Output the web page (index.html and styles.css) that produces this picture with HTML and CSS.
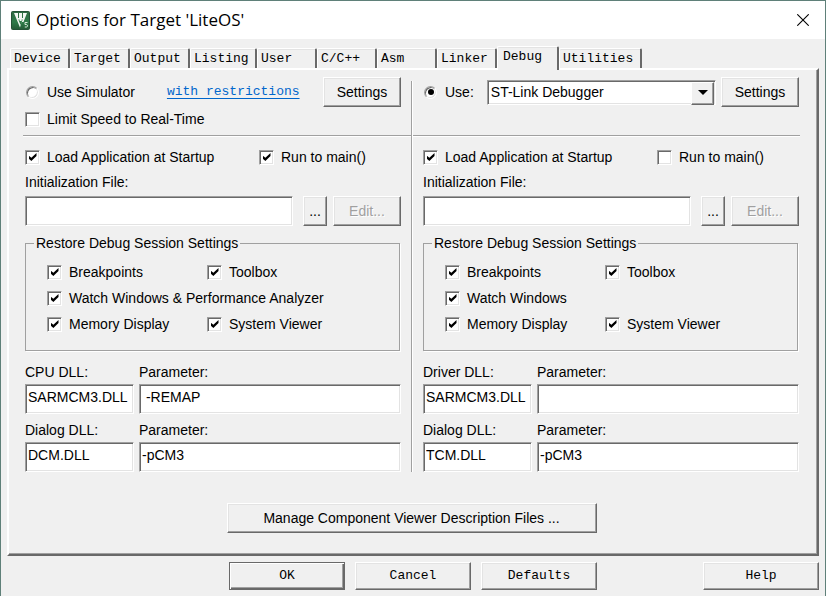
FILE: index.html
```html
<!DOCTYPE html>
<html lang="en">
<head>
<meta charset="utf-8">
<title>Options for Target 'LiteOS'</title>
<link rel="stylesheet" href="styles.css">
</head>
<body>
<main class="window">
  <header class="titlebar">
    <svg class="logo" viewBox="0 0 19 19" aria-hidden="true">
      <defs><linearGradient id="g" x1="0" y1="0" x2="0" y2="1"><stop offset="0" stop-color="#2f6b43"/><stop offset=".6" stop-color="#2e7a48"/><stop offset="1" stop-color="#235a36"/></linearGradient></defs>
      <rect x=".5" y=".5" width="18" height="18" rx="1" fill="url(#g)" stroke="#245236"/>
      <path d="M3 2h4v5h1V2h3v5h1V2h4l-3.500 9h-2L9 16.500Z" fill="#f3f8f3"/>
      <path d="M7.300 8.500h4.400L9.600 14Z" fill="#2e7a48"/>
      <path d="M8.600 8h2v2h-2Z" fill="#f3f8f3"/>
      <path d="M16.500 11.500h-2.500v2h1.500q1 .3 1 1.300t-1 1.200h-1.700" fill="none" stroke="#d5e8d8"/>
    </svg>
    <h1>Options for Target 'LiteOS'</h1>
    <button class="close" type="button" aria-label="Close"><svg viewBox="0 0 12 12"><path d="M.3.3l11.400 11.400M11.700.3L.3 11.700" fill="none" stroke="#000" stroke-width="1.100"/></svg></button>
  </header>

  <nav class="tabs" role="tablist">
    <button type="button" role="tab">Device</button>
    <button type="button" role="tab">Target</button>
    <button type="button" role="tab">Output</button>
    <button type="button" role="tab" class="wide">Listing</button>
    <button type="button" role="tab">User</button>
    <button type="button" role="tab">C/C++</button>
    <button type="button" role="tab">Asm</button>
    <button type="button" role="tab">Linker</button>
    <button type="button" role="tab" class="active" aria-selected="true">Debug</button>
    <button type="button" role="tab" class="last">Utilities</button>
  </nav>

  <section class="panel">
    <div class="columns">
      <div class="column simulator">
        <div class="source">
          <div class="row">
            <label class="check"><input type="radio" name="source">Use Simulator</label>
            <a class="link" href="#">with restrictions</a>
            <button class="btn settings" type="button">Settings</button>
          </div>
          <label class="check limit"><input type="checkbox">Limit Speed to Real-Time</label>
        </div>
        <hr>
        <div class="startup">
          <label class="check"><input type="checkbox" checked>Load Application at Startup</label>
          <label class="check"><input type="checkbox" checked>Run to main()</label>
        </div>
        <label class="caption" for="init1">Initialization File:</label>
        <div class="file">
          <input class="text" id="init1" type="text">
          <button class="btn browse" type="button">...</button>
          <button class="btn edit" type="button" disabled>Edit...</button>
        </div>
        <fieldset>
          <legend>Restore Debug Session Settings</legend>
          <label class="check"><input type="checkbox" checked>Breakpoints</label>
          <label class="check"><input type="checkbox" checked>Toolbox</label>
          <label class="check full"><input type="checkbox" checked>Watch Windows &amp; Performance Analyzer</label>
          <label class="check"><input type="checkbox" checked>Memory Display</label>
          <label class="check"><input type="checkbox" checked>System Viewer</label>
        </fieldset>
        <div class="dlls">
          <label for="cpu1">CPU DLL:</label>
          <label for="cpup1">Parameter:</label>
          <input class="text" id="cpu1" type="text" value="SARMCM3.DLL">
          <input class="text" id="cpup1" type="text" value=" -REMAP">
        </div>
        <div class="dlls">
          <label for="dlg1">Dialog DLL:</label>
          <label for="dlgp1">Parameter:</label>
          <input class="text" id="dlg1" type="text" value="DCM.DLL">
          <input class="text" id="dlgp1" type="text" value="-pCM3">
        </div>
      </div>

      <div class="divider"></div>

      <div class="column target">
        <div class="source">
          <div class="row">
            <label class="check"><input type="radio" name="source" checked>Use:</label>
            <span class="select"><select aria-label="Debugger"><option>ST-Link Debugger</option></select></span>
            <button class="btn settings" type="button">Settings</button>
          </div>
        </div>
        <hr>
        <div class="startup">
          <label class="check"><input type="checkbox" checked>Load Application at Startup</label>
          <label class="check"><input type="checkbox">Run to main()</label>
        </div>
        <label class="caption" for="init2">Initialization File:</label>
        <div class="file">
          <input class="text" id="init2" type="text">
          <button class="btn browse" type="button">...</button>
          <button class="btn edit" type="button" disabled>Edit...</button>
        </div>
        <fieldset>
          <legend>Restore Debug Session Settings</legend>
          <label class="check"><input type="checkbox" checked>Breakpoints</label>
          <label class="check"><input type="checkbox" checked>Toolbox</label>
          <label class="check full"><input type="checkbox" checked>Watch Windows</label>
          <label class="check"><input type="checkbox" checked>Memory Display</label>
          <label class="check"><input type="checkbox" checked>System Viewer</label>
        </fieldset>
        <div class="dlls">
          <label for="drv2">Driver DLL:</label>
          <label for="drvp2">Parameter:</label>
          <input class="text" id="drv2" type="text" value="SARMCM3.DLL">
          <input class="text" id="drvp2" type="text">
        </div>
        <div class="dlls">
          <label for="dlg2">Dialog DLL:</label>
          <label for="dlgp2">Parameter:</label>
          <input class="text" id="dlg2" type="text" value="TCM.DLL">
          <input class="text" id="dlgp2" type="text" value="-pCM3">
        </div>
      </div>
    </div>
    <button class="btn manage" type="button">Manage Component Viewer Description Files ...</button>
  </section>

  <footer class="actions">
    <span class="main-actions">
      <button class="btn default" type="button">OK</button>
      <button class="btn" type="button">Cancel</button>
      <button class="btn" type="button">Defaults</button>
    </span>
    <button class="btn" type="button">Help</button>
  </footer>
</main>
</body>
</html>
```
FILE: styles.css
```css
* { box-sizing: border-box; }

body {
  margin: 0;
  background: #f0f0f0;
  color: #000;
  font: 14px/18px "Liberation Sans", Arial, sans-serif;
}

button, input, select { font: inherit; color: inherit; border-radius: 0; }

.window {
  min-height: 100vh;
  border: 1px solid #5f8079;
  padding-bottom: 6px;
}

.titlebar {
  display: flex;
  align-items: center;
  height: 38px;
  padding: 0 16px 0 10px;
  background: #fff;
}
.logo { width: 19px; height: 19px; }
h1 {
  flex: 1;
  margin: 0 0 0 6px;
  font: 17px/24px "Open Sans", "Segoe UI", sans-serif;
}
.close {
  display: flex;
  padding: 0;
  border: 0;
  background: none;
}
.close svg { width: 12px; height: 12px; }

.tabs {
  display: flex;
  align-items: flex-end;
  height: 29px;
  padding-left: 9px;
}
.tabs button {
  width: 60px;
  height: 20px;
  padding: 0 0 0 3px;
  border: solid;
  border-width: 1px 2px 0 1px;
  border-color: #fff #696969 #fff #fff;
  border-radius: 2px 2px 0 0;
  background: #f0f0f0;
  box-shadow: inset 0 1px #e3e3e3;
  font: 13px/18px "Liberation Mono", monospace;
  text-align: left;
}
.tabs .wide { width: 67px; }
.tabs .last { width: 83px; }
.tabs .active {
  position: relative;
  width: 62px;
  height: 24px;
  margin-bottom: -2px;
  padding: 0 0 4px 5px;
}

.panel {
  margin: 0 6px;
  padding: 7px 17px 21px 14px;
  border: 2px solid;
  border-color: #fff #696969 #696969 #fff;
  box-shadow: inset -1px -1px #a0a0a0;
}

.columns { display: flex; }
.column { flex: 1; box-sizing: content-box; min-width: 0; }
.simulator { padding: 0 10px 0 2px; }
.target { padding: 0 1px 0 10px; }
.divider {
  width: 2px;
  margin-top: 4px;
  background: linear-gradient(to right, #a0a0a0 50%, #fff 50%);
}

.source { height: 58px; }
.row { display: flex; align-items: center; }
.settings { width: 78px; margin-left: auto; }
.link {
  margin-left: 32px;
  color: #0066cc;
  font: 13px/18px "Liberation Mono", monospace;
  text-underline-offset: 3px;
}
.limit { margin-top: 3px; }

.check { display: flex; align-items: center; gap: 7px; white-space: nowrap; }
.check input {
  display: grid;
  place-items: center;
  appearance: none;
  flex: none;
  width: 15px;
  height: 15px;
  margin: 0;
  border: 1px solid;
  border-color: #a0a0a0 #fff #fff #a0a0a0;
  background: #fff;
  box-shadow: inset 1px 1px #696969, inset -1px -1px #e3e3e3;
}
.check input:checked::before {
  content: "";
  width: 8px;
  height: 8px;
  background: #000;
  clip-path: polygon(0 30%, 36% 60%, 100% 0, 100% 38%, 36% 100%, 0 68%);
}
.check input[type="radio"] {
  width: 13px;
  height: 13px;
  margin: 0 1px;
  border-radius: 50%;
}
.check input[type="radio"]:checked::before {
  width: 6px;
  height: 6px;
  border-radius: 50%;
  clip-path: none;
}

hr {
  height: 2px;
  margin: 0;
  border: 0;
  background: linear-gradient(#a0a0a0 50%, #fff 50%);
}
.simulator hr { margin: 0 -10px 0 -2px; }
.target hr { margin: 0 -1px 0 -10px; }

.startup {
  display: grid;
  grid-template-columns: 234px 1fr;
  margin-top: 11px;
}
.caption { display: block; margin-top: 7px; }
.file { display: flex; margin-top: 5px; }
.file .text { flex: 1; }
.browse { width: 24px; margin-left: 10px; }
.edit { width: 68px; margin-left: 6px; }

.text {
  min-width: 0;
  width: 100%;
  height: 30px;
  padding: 0 2px 5px;
  border: 1px solid;
  border-color: #a0a0a0 #fff #fff #a0a0a0;
  background: #fff;
  box-shadow: inset 1px 1px #696969, inset -1px -1px #e3e3e3;
}

.btn {
  height: 30px;
  padding: 0;
  border: 1px solid;
  border-color: #fff #696969 #696969 #fff;
  background: #f0f0f0;
  box-shadow: inset -1px -1px #a0a0a0, inset 1px 1px #e3e3e3;
}
.btn:disabled { color: #a0a0a0; text-shadow: 1px 1px #fff; }

.select { position: relative; margin-left: 13px; flex: 1; }
.select select {
  display: block;
  width: 100%;
  height: 25px;
  padding: 0 24px 0 3px;
  appearance: none;
  border: 1px solid;
  border-color: #a0a0a0 #fff #fff #a0a0a0;
  background: #fff;
  box-shadow: inset 1px 1px #696969, inset -1px -1px #e3e3e3;
}
.select::before {
  content: "";
  position: absolute;
  top: 2px;
  right: 2px;
  width: 21px;
  height: 21px;
  border: 1px solid;
  border-color: #fff #696969 #696969 #fff;
  background: #f0f0f0;
  box-shadow: inset -1px -1px #a0a0a0;
  pointer-events: none;
}
.select::after {
  content: "";
  position: absolute;
  top: 10px;
  right: 8px;
  border: solid transparent;
  border-width: 5px 5px 0;
  border-top-color: #000;
  pointer-events: none;
}
.select + .settings { margin-left: 5px; }

fieldset {
  display: grid;
  grid-template-columns: 160px 1fr;
  row-gap: 8px;
  min-width: 0;
  margin: 8px 1px 0 0;
  padding: 11px 20px 17px 21px;
  border: 1px solid #a0a0a0;
  box-shadow: 1px 1px #fff;
}
legend { margin-left: -13px; padding: 0 2px; }
.full { grid-column: 1 / -1; }

.dlls {
  display: grid;
  grid-template-columns: 109px 1fr;
  column-gap: 5px;
  row-gap: 3px;
  margin-top: 7px;
}
fieldset + .dlls { margin-top: 12px; }

.manage { display: block; width: 370px; margin: 31px auto 0; }

.actions {
  display: flex;
  justify-content: space-between;
  margin: 6px 6px 0 228px;
}
.main-actions { display: flex; gap: 10px; }
.actions .btn {
  width: 116px;
  height: 28px;
  font: 13px/18px "Liberation Mono", monospace;
}
.actions .default {
  border-color: #696969;
  box-shadow: inset 1px 1px #fff, inset -1px -1px #696969, inset -2px -2px #a0a0a0;
}
```
